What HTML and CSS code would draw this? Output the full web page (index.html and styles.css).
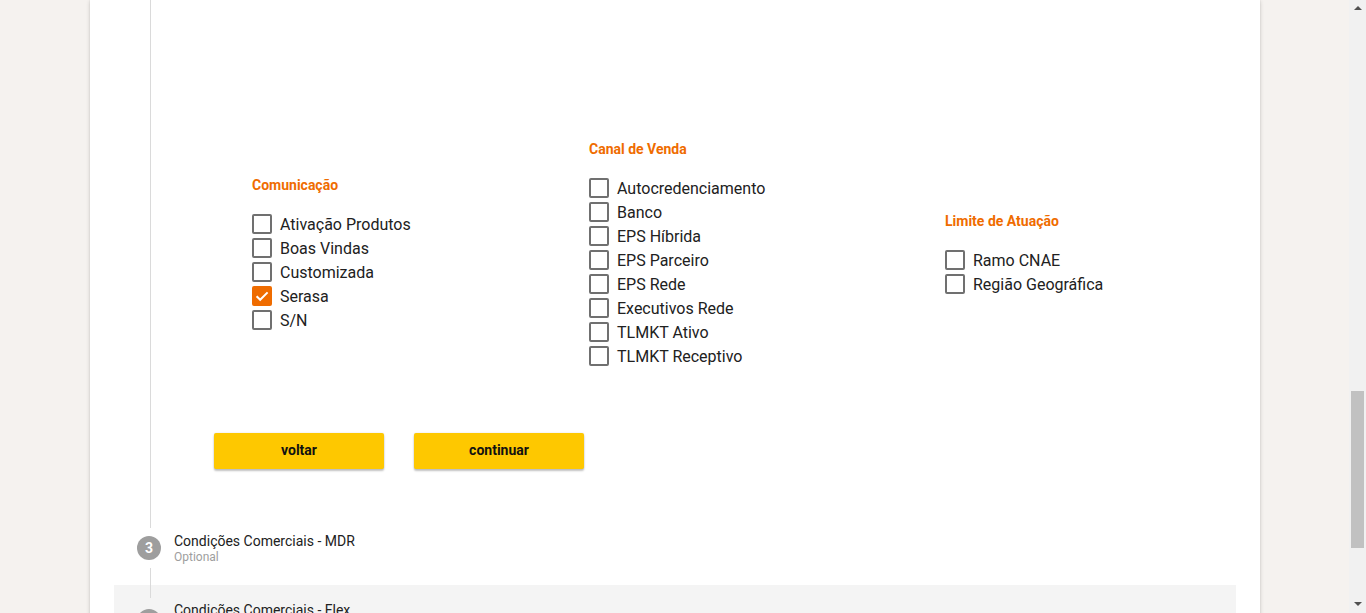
FILE: index.html
```html
<!DOCTYPE html>
<html lang="pt">
<head>
<meta charset="utf-8">
<title>Stepper</title>
<link rel="stylesheet" href="styles.css">
</head>
<body>
<div class="viewport">
  <main class="page">
    <section class="card">
      <div class="step-content">
        <div class="groups">
          <div class="group">
            <h3 class="group-title">Comunicação</h3>
            <ul class="checks">
              <li class="check"><span class="box"></span>Ativação Produtos</li>
              <li class="check"><span class="box"></span>Boas Vindas</li>
              <li class="check"><span class="box"></span>Customizada</li>
              <li class="check"><span class="box checked"><svg viewBox="0 0 18 18" width="18" height="18"><path d="M3.6 9.2 L7.2 12.8 L14.6 5.4" fill="none" stroke="#fff" stroke-width="2"/></svg></span>Serasa</li>
              <li class="check"><span class="box"></span>S/N</li>
            </ul>
          </div>
          <div class="group">
            <h3 class="group-title">Canal de Venda</h3>
            <ul class="checks">
              <li class="check"><span class="box"></span>Autocredenciamento</li>
              <li class="check"><span class="box"></span>Banco</li>
              <li class="check"><span class="box"></span>EPS Híbrida</li>
              <li class="check"><span class="box"></span>EPS Parceiro</li>
              <li class="check"><span class="box"></span>EPS Rede</li>
              <li class="check"><span class="box"></span>Executivos Rede</li>
              <li class="check"><span class="box"></span>TLMKT Ativo</li>
              <li class="check"><span class="box"></span>TLMKT Receptivo</li>
            </ul>
          </div>
          <div class="group">
            <h3 class="group-title">Limite de Atuação</h3>
            <ul class="checks">
              <li class="check"><span class="box"></span>Ramo CNAE</li>
              <li class="check"><span class="box"></span>Região Geográfica</li>
            </ul>
          </div>
        </div>
        <div class="actions">
          <button class="btn">voltar</button>
          <button class="btn">continuar</button>
        </div>
      </div>

      <div class="step-header">
        <div class="rail">
          <span class="num">3</span>
          <span class="line line-below"></span>
        </div>
        <div class="label">
          <div class="label-title">Condições Comerciais - MDR</div>
          <div class="label-opt">Optional</div>
        </div>
      </div>

      <div class="step-header active">
        <div class="rail rail-next">
          <span class="line line-above"></span>
          <span class="num">4</span>
        </div>
        <div class="label label-next">
          <div class="label-title">Condições Comerciais - Flex</div>
        </div>
      </div>
    </section>
  </main>
  <aside class="scrollbar">
    <span class="arrow up"></span>
    <div class="track"><span class="thumb"></span></div>
    <span class="arrow down"></span>
  </aside>
</div>
</body>
</html>
```

FILE: styles.css
```css
* { box-sizing: border-box; }
html, body { margin: 0; padding: 0; }
body {
  background: #f5f2ef;
  font-family: Roboto, "Liberation Sans", Arial, sans-serif;
  color: rgba(0,0,0,0.87);
  overflow: hidden;
}
.viewport {
  display: flex;
  height: 613px;
  width: 1366px;
  overflow: hidden;
}
.page {
  flex: 1;
  padding-left: 90px;
  overflow: hidden;
}
.card {
  width: 1170px;
  height: 700px;
  background: #fff;
  box-shadow: 0 1px 4px rgba(0,0,0,0.18), 0 0 1px rgba(0,0,0,0.12);
  padding: 0 24px;
}
.step-content {
  margin-left: 36px;
  border-left: 1px solid #dadada;
  height: 528px;
  padding-left: 63px;
  padding-top: 139px;
}
.groups {
  display: grid;
  grid-template-columns: 337px 356px 1fr;
  align-items: center;
  margin-left: 38px;
  height: 229px;
}
.group-title {
  margin: 0 0 17px;
  font-size: 14px;
  line-height: 20px;
  font-weight: 700;
  color: #ef6c00;
}
.checks {
  list-style: none;
  margin: 0;
  padding: 0;
}
.check {
  display: flex;
  align-items: center;
  height: 24px;
  font-size: 16px;
  color: #212121;
}
.box {
  width: 20px;
  height: 20px;
  border: 2px solid #707070;
  border-radius: 2px;
  margin-right: 8px;
  display: inline-flex;
  align-items: center;
  justify-content: center;
  flex: none;
}
.box.checked {
  background: #ef6c00;
  border-color: #ef6c00;
}
.box svg { display: block; flex: none; }
.actions {
  display: flex;
  gap: 30px;
  margin-top: 65px;
}
.btn {
  width: 170px;
  height: 36px;
  padding: 0 0 2px;
  border: 0;
  border-radius: 2px;
  background: #fec800;
  color: #111;
  font-family: Roboto, "Liberation Sans", Arial, sans-serif;
  font-size: 14px;
  font-weight: 700;
  box-shadow: 0 2px 2px rgba(0,0,0,0.24), 0 0 2px rgba(0,0,0,0.12);
  cursor: pointer;
}
.step-header {
  display: flex;
  height: 57px;
  padding-left: 23px;
}
.step-header.active {
  background: #f4f4f4;
  height: 80px;
}
.rail {
  width: 24px;
  display: flex;
  flex-direction: column;
  padding-top: 8px;
}
.rail-next { padding-top: 0; }
.num {
  width: 24px;
  height: 24px;
  border-radius: 50%;
  background: #9e9e9e;
  color: #fff;
  font-size: 14px;
  font-weight: 700;
  display: flex;
  align-items: center;
  justify-content: center;
  flex: none;
}
.line {
  width: 1px;
  background: #dadada;
  margin-left: 13px;
  flex: none;
}
.line-below { margin-top: 8px; flex: 1; }
.line-above { height: 13px; margin-bottom: 11px; }
.label {
  padding-left: 13px;
  padding-top: 5px;
}
.label-next { padding-top: 17px; }
.label-title {
  font-size: 14px;
  line-height: 16px;
  color: #212121;
}
.label-opt {
  font-size: 12px;
  line-height: 16px;
  color: #9e9e9e;
}
.scrollbar {
  width: 17px;
  flex: none;
  background: #f1f1f1;
  display: flex;
  flex-direction: column;
  align-items: center;
}
.arrow {
  width: 0;
  height: 0;
  border-left: 4px solid transparent;
  border-right: 4px solid transparent;
  flex: none;
}
.arrow.up { border-bottom: 4px solid #505050; margin-top: 6px; }
.arrow.down { border-top: 4px solid #505050; margin-bottom: 7px; }
.track {
  flex: 1;
  width: 100%;
  padding: 0 2px;
  display: flex;
  flex-direction: column;
}
.thumb {
  display: block;
  margin-top: 381px;
  height: 157px;
  background: #c1c1c1;
}
```
